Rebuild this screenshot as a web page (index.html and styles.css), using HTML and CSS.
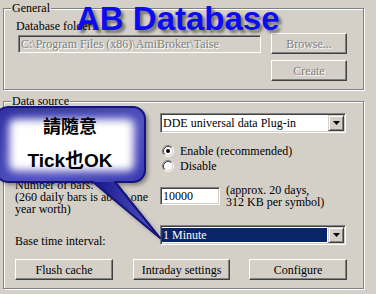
FILE: index.html
```html
<!DOCTYPE html>
<html>
<head>
<meta charset="utf-8">
<link rel="stylesheet" href="styles.css">
</head>
<body>
<div class="dlg">
  <fieldset class="grp">
    <legend>General</legend>
    <div class="gen-body">
      <div class="lbl">Database folder:</div>
      <div class="gen-grid">
        <div class="edit edit-disabled">C:\Program Files (x86)\AmiBroker\Taise</div>
        <div class="btn btn-disabled">Browse...</div>
        <div class="btn btn-disabled btn-create">Create</div>
      </div>
    </div>
  </fieldset>
  <fieldset class="grp grp-ds">
    <legend>Data source</legend>
    <div class="ds-body">
      <div class="ds-grid">
        <div></div>
        <div class="combo"><span class="combo-text">DDE universal data Plug-in</span><span class="drop"><svg width="7" height="4" viewBox="0 0 7 4"><polygon points="0,0 7,0 3.5,4" fill="#000"/></svg></span></div>
        <div></div>
        <div class="radios">
          <div class="radio"><svg class="rb" width="12" height="12" viewBox="0 0 12 12"><circle cx="6" cy="6" r="4.5" fill="#fff"/><path d="M2.11 9.89A5.5 5.5 0 0 1 9.89 2.11" fill="none" stroke="#808080"/><path d="M9.89 2.11A5.5 5.5 0 0 1 2.11 9.89" fill="none" stroke="#fff"/><path d="M2.82 9.18A4.5 4.5 0 0 1 9.18 2.82" fill="none" stroke="#404040"/><path d="M9.18 2.82A4.5 4.5 0 0 1 2.82 9.18" fill="none" stroke="#d4d0c8"/><circle cx="6" cy="6" r="2" fill="#000"/></svg>Enable (recommended)</div>
          <div class="radio"><svg class="rb" width="12" height="12" viewBox="0 0 12 12"><circle cx="6" cy="6" r="4.5" fill="#fff"/><path d="M2.11 9.89A5.5 5.5 0 0 1 9.89 2.11" fill="none" stroke="#808080"/><path d="M9.89 2.11A5.5 5.5 0 0 1 2.11 9.89" fill="none" stroke="#fff"/><path d="M2.82 9.18A4.5 4.5 0 0 1 9.18 2.82" fill="none" stroke="#404040"/><path d="M9.18 2.82A4.5 4.5 0 0 1 2.82 9.18" fill="none" stroke="#d4d0c8"/></svg>Disable</div>
        </div>
        <div class="lbl lbl-bars">Number of bars:<br>(260 daily bars is about one<br>year worth)</div>
        <div class="bars-row">
          <div class="edit edit-num">10000</div>
          <div class="note">(approx. 20 days,<br>312 KB per symbol)</div>
        </div>
        <div class="lbl lbl-base">Base time interval:</div>
        <div class="combo combo-2"><span class="combo-text sel">1 Minute</span><span class="drop"><svg width="7" height="4" viewBox="0 0 7 4"><polygon points="0,0 7,0 3.5,4" fill="#000"/></svg></span></div>
      </div>
      <div class="btn-row">
        <div class="btn btn-flush">Flush cache</div>
        <div class="btn btn-intra">Intraday settings</div>
        <div class="btn btn-conf">Configure</div>
      </div>
    </div>
  </fieldset>
</div>

<div class="title">AB Database</div>

<svg class="callout" width="200" height="260" viewBox="0 0 200 260">
  <defs>
    <linearGradient id="cfill" x1="0" y1="0" x2="1" y2="1">
      <stop offset="0" stop-color="#2c2ca0"/>
      <stop offset="0.6" stop-color="#5050c0"/>
      <stop offset="1" stop-color="#3434ac"/>
    </linearGradient>
    <linearGradient id="tfill" x1="0" y1="0" x2="1" y2="0">
      <stop offset="0" stop-color="#16168a"/>
      <stop offset="1" stop-color="#5858c6"/>
    </linearGradient>
    <filter id="blur6" x="-20%" y="-30%" width="140%" height="160%"><feGaussianBlur stdDeviation="4"/></filter>
    <filter id="blur2" x="-20%" y="-20%" width="140%" height="140%"><feGaussianBlur stdDeviation="2"/></filter>
    <clipPath id="cclip"><path d="M8 107H133A12 12 0 0 1 145 119V170A12 12 0 0 1 133 182H115L160 238L93 182H8A12 12 0 0 1 -4 170V119A12 12 0 0 1 8 107Z"/></clipPath>
  </defs>
  <path d="M8 107H133A12 12 0 0 1 145 119V170A12 12 0 0 1 133 182H115L160 238L93 182H8A12 12 0 0 1 -4 170V119A12 12 0 0 1 8 107Z" fill="rgba(0,0,0,0.4)" transform="translate(3 3)" filter="url(#blur2)"/>
  <g clip-path="url(#cclip)">
    <rect x="-10" y="100" width="160" height="90" fill="url(#cfill)"/>
    <path d="M93 182L160 238L115 182Z" fill="url(#tfill)"/>
    <rect x="9" y="119" width="125" height="52" rx="6" fill="#fff" filter="url(#blur6)"/>
  </g>
  <path d="M8 107H133A12 12 0 0 1 145 119V170A12 12 0 0 1 133 182H115L160 238L93 182H8A12 12 0 0 1 -4 170V119A12 12 0 0 1 8 107Z" fill="none" stroke="#14147c" stroke-width="2" stroke-linejoin="round"/>
</svg>
<div class="callout-text"><span class="ct1">請隨意</span><br><span class="ct2">Tick也OK</span></div>
</body>
</html>
```
FILE: styles.css
```css
* { box-sizing: border-box; }
html, body { margin: 0; padding: 0; }
body {
  width: 376px;
  height: 294px;
  overflow: hidden;
  position: relative;
  background: #d4d0c8;
  font: 12px/14px "Liberation Serif", "Times New Roman", serif;
  color: #000;
}
.dlg { padding: 2px 0 0 3px; }
.grp {
  margin: 0;
  padding: 0;
  width: 361px;
  min-width: 0;
  border: 1px solid #808080;
  box-shadow: inset 1px 1px 0 #fff, 1px 1px 0 #fff;
}
.grp legend {
  margin-left: 7px;
  padding: 0 1px;
  line-height: 13px;
  background: #d4d0c8;
}
.grp-ds { margin-top: 5px; }

.gen-body { padding: 4px 0 8px 12px; }
.lbl { white-space: nowrap; }
.gen-grid {
  display: grid;
  grid-template-columns: 243px 76px;
  column-gap: 10px;
  row-gap: 6px;
  margin-left: 2px;
}
.btn-create { grid-column: 2; }

.edit {
  height: 18px;
  border: 1px solid;
  border-color: #808080 #fff #fff #808080;
  box-shadow: inset 1px 1px 0 #404040, inset -1px -1px 0 #d4d0c8;
  padding: 0 2px;
  line-height: 16px;
  white-space: nowrap;
  overflow: hidden;
  background: #fff;
}
.edit-disabled {
  margin-top: 2px;
  background: #d4d0c8;
  color: #808080;
  text-shadow: 1px 1px 0 #fff;
}
.btn {
  height: 21px;
  border: 1px solid;
  border-color: #fff #404040 #404040 #fff;
  box-shadow: inset -1px -1px 0 #808080;
  background: #d4d0c8;
  display: flex;
  align-items: center;
  justify-content: center;
  white-space: nowrap;
}
.btn-disabled { color: #808080; text-shadow: 1px 1px 0 #fff; }

.ds-body { padding: 5px 0 8px 11px; }
.ds-grid {
  display: grid;
  grid-template-columns: 145px 186px;
}
.combo {
  height: 20px;
  background: #fff;
  border: 1px solid;
  border-color: #808080 #fff #fff #808080;
  box-shadow: inset 1px 1px 0 #404040, inset -1px -1px 0 #d4d0c8;
  padding: 1px;
  display: flex;
}
.combo-text {
  flex: 1;
  padding-left: 1px;
  line-height: 16px;
  white-space: nowrap;
  overflow: hidden;
}
.combo-text.sel {
  margin: 1px 1px 1px 0;
  line-height: 14px;
  background: #0a246a;
  color: #fff;
}
.drop {
  width: 16px;
  background: #d4d0c8;
  border: 1px solid;
  border-color: #d4d0c8 #404040 #404040 #d4d0c8;
  box-shadow: inset 1px 1px 0 #fff, inset -1px -1px 0 #808080;
  display: flex;
  align-items: center;
  justify-content: center;
}
.radios { margin-top: 10px; }
.radio {
  height: 15px;
  display: flex;
  align-items: center;
  white-space: nowrap;
}
.rb { margin: 0 6px 0 2px; flex: none; }
.lbl-bars { margin-top: 6px; line-height: 12px; }
.bars-row { margin-top: 6px; display: flex; align-items: flex-start; }
.edit-num { width: 60px; margin-top: 8px; }
.note { margin: 5px 0 0 6px; line-height: 12px; white-space: nowrap; }
.lbl-base { margin-top: 10px; align-self: center; line-height: 12px; padding-top: 10px; }
.combo-2 { margin-top: 10px; }
.btn-row { display: flex; margin-top: 12px; }
.btn-flush { width: 98px; }
.btn-intra { width: 97px; margin-left: 20px; }
.btn-conf { width: 98px; margin-left: 19px; }

.title {
  position: absolute;
  left: 76px;
  top: 2px;
  font: bold 33px/33px "Liberation Sans", Arial, sans-serif;
  color: #0c0cf4;
  text-shadow: 3px 3px 3px rgba(0, 0, 0, 0.45);
  white-space: nowrap;
}
.callout {
  position: absolute;
  left: 0;
  top: 0;
}
.callout-text {
  position: absolute;
  left: 0;
  top: 112px;
  width: 140px;
  text-align: center;
  font-family: "Liberation Sans", "Noto Sans CJK TC", sans-serif;
  font-weight: bold;
  line-height: 31px;
  color: #000;
}
.ct1 { font-size: 18px; }
.ct2 { font-size: 19px; }
```
